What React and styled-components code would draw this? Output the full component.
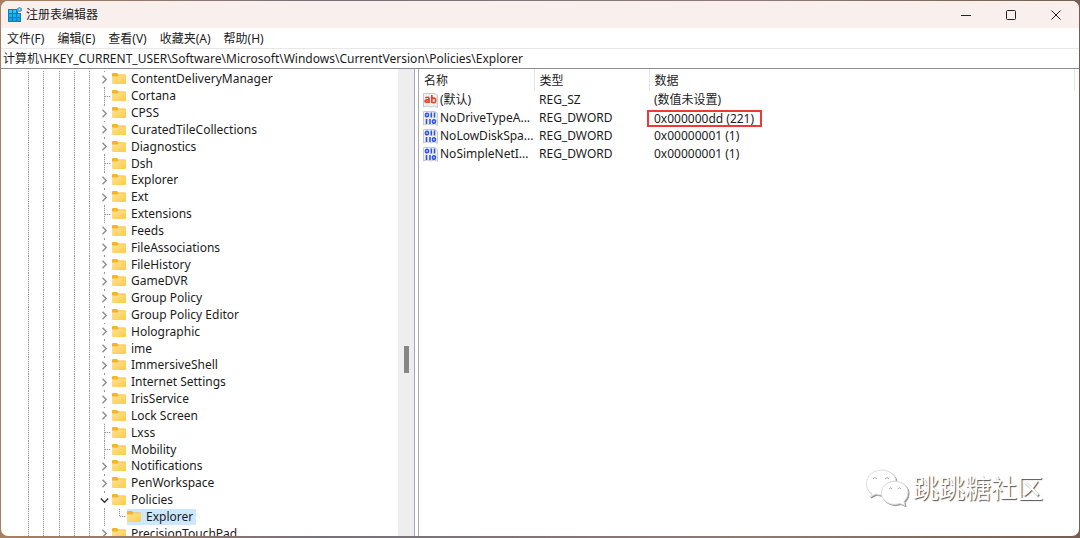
import React, {useState} from "react";
import styled, {createGlobalStyle} from "styled-components";

const keys = [
    {name: "ContentDeliveryManager", kids: true},
    {name: "Cortana"},
    {name: "CPSS", kids: true},
    {name: "CuratedTileCollections", kids: true},
    {name: "Diagnostics", kids: true},
    {name: "Dsh"},
    {name: "Explorer", kids: true},
    {name: "Ext", kids: true},
    {name: "Extensions"},
    {name: "Feeds", kids: true},
    {name: "FileAssociations", kids: true},
    {name: "FileHistory", kids: true},
    {name: "GameDVR", kids: true},
    {name: "Group Policy", kids: true},
    {name: "Group Policy Editor", kids: true},
    {name: "Holographic", kids: true},
    {name: "ime", kids: true},
    {name: "ImmersiveShell", kids: true},
    {name: "Internet Settings", kids: true},
    {name: "IrisService", kids: true},
    {name: "Lock Screen", kids: true},
    {name: "Lxss"},
    {name: "Mobility"},
    {name: "Notifications", kids: true},
    {name: "PenWorkspace", kids: true},
    {name: "Policies", kids: true, open: true},
    {name: "Explorer", child: true},
    {name: "PrecisionTouchPad", kids: true},
];

const values = [
    {name: "(默认)", type: "REG_SZ", data: "(数值未设置)"},
    {name: "NoDriveTypeA...", type: "REG_DWORD", data: "0x000000dd (221)", marked: true},
    {name: "NoLowDiskSpa...", type: "REG_DWORD", data: "0x00000001 (1)"},
    {name: "NoSimpleNetI...", type: "REG_DWORD", data: "0x00000001 (1)"},
];

const menus = ["文件(F)", "编辑(E)", "查看(V)", "收藏夹(A)", "帮助(H)"];

function AppIcon() {
    return (
        <svg width="16" height="16" viewBox="0 0 16 16">
            <path d="M1 2h10v4h3v9H1z" fill="#0c7fb8"/>
            <path d="M2 3h3v3H2zM6 3h3v3H6z" fill="#36c0f0"/>
            <path d="M2 7h3v3H2zM6 7h3v3H6zM10 7h3v3h-3z" fill="#22aee8"/>
            <path d="M2 11h3v3H2zM6 11h3v3H6zM10 11h3v3h-3z" fill="#1b9fdc"/>
            <path d="M12.500 0L15 1.300v2.700l-2.500 1.300L10 4V1.300z" fill="#4aa6d0"/>
            <circle cx="12.500" cy="2.600" r="1" fill="#a8e2f7"/>
        </svg>
    );
}

function FolderIcon() {
    return (
        <svg width="14" height="12" viewBox="0 0 14 12">
            <defs>
                <linearGradient id="folder" x1="0" y1="0" x2="1" y2="1">
                    <stop offset="0" stopColor="#ffe39a"/>
                    <stop offset="1" stopColor="#fccb45"/>
                </linearGradient>
            </defs>
            <path d="M0 1q0-1 1-1h4l1.300 1.500H13q1 0 1 1V6H0z" fill="#f5b424"/>
            <path d="M0 3.500h5.500l1.200-1.200H14V10q0 1-1 1H1q-1 0-1-1z" fill="url(#folder)"/>
        </svg>
    );
}

function ValueIcon({text}) {
    return (
        <svg width="15" height="15" viewBox="0 0 15 15">
            <path d="M.5.5h11.500l2.500 2v12l-3-1.500-3.500 1-3.500-1-4 1z" fill="#eef0f3" stroke="#c6cad0"/>
            {text ? (
                <g fill="none" stroke="#e0472a" strokeWidth="1.700">
                    <path d="M2.300 4.800q3.700-1.500 3.700.9V10M6 7q-3.900-.3-3.900 1.300T6 8.800M8.800 2v8M8.800 5.800q3.900-1.800 3.900 1.500t-3.900 1.900"/>
                </g>
            ) : (
                <g fill="none" stroke="#2e55e6" strokeWidth="1.600">
                    <ellipse cx="4" cy="4" rx="1.500" ry="1.800"/>
                    <path d="M8.300 1.500v5M11.500 1.500v5M3.500 8v5M7 8v5"/>
                    <ellipse cx="11" cy="10.500" rx="1.500" ry="1.800"/>
                </g>
            )}
        </svg>
    );
}

function Chevron({open}) {
    return (
        <svg width="9" height="9" viewBox="0 0 9 9" fill="none" stroke={open ? "#333" : "#8c8c8c"} strokeWidth="1.400">
            <path d={open ? "M.8 2.500l3.700 3.700 3.700-3.700" : "M2.500.8l3.700 3.700-3.700 3.700"}/>
        </svg>
    );
}

function TreeRow({item, selected, onSelect}) {
    return (
        <Row>
            <Guides><i/><i/><i/><i/><i/></Guides>
            <Joint $branch={!item.kids && !item.child}>
                {item.kids && <Toggle aria-label={item.name}><Chevron open={item.open}/></Toggle>}
            </Joint>
            {item.child && <Joint $branch $corner/>}
            <KeyButton $selected={selected} onClick={onSelect}>
                <FolderIcon/>
                <span>{item.name}</span>
            </KeyButton>
        </Row>
    );
}

function Watermark() {
    return (
        <Mark>
            <svg width="44" height="38" viewBox="0 0 44 38" fill="#fff" stroke="#ddd" strokeWidth="1">
                <path d="M7 25C-2 19 .5 6 10 2.500c9-4 20 .5 21 9.500-8 0-15 5-14 14-2 .2-4-.2-6-1l-6 3z"/>
                <path d="M30 12.500c8 0 13 5 13 11 0 4-2 7-4 9l1 4-5-2c-9 3-18-2-18.500-10C16 18 22 12.500 30 12.500z"/>
                <path d="M8 10q2-3 4 0M20 10q2-3 4 0M24 20q1.500-2.500 3 0M33 20q1.500-2.500 3 0" fill="none" stroke="#aaa"/>
            </svg>
            <span>跳跳糖社区</span>
        </Mark>
    );
}

export default function App() {
    const [selected, setSelected] = useState(26);

    return (
        <Desktop>
            <GlobalStyle/>
            <Window>
                <TitleBar>
                    <AppIcon/>
                    <h1>注册表编辑器</h1>
                    <WindowButton aria-label="最小化">
                        <svg width="10" height="10" viewBox="0 0 10 10"><path d="M0 5.500h10"/></svg>
                    </WindowButton>
                    <WindowButton aria-label="最大化">
                        <svg width="10" height="10" viewBox="0 0 10 10"><rect x=".5" y=".5" width="9" height="9" rx="1"/></svg>
                    </WindowButton>
                    <WindowButton aria-label="关闭">
                        <svg width="10" height="10" viewBox="0 0 10 10"><path d="M.5.5l9 9M9.500.5l-9 9"/></svg>
                    </WindowButton>
                </TitleBar>
                <MenuBar>
                    {menus.map((menu) => <button key={menu}>{menu}</button>)}
                </MenuBar>
                <Address
                    aria-label="地址"
                    defaultValue="计算机\HKEY_CURRENT_USER\Software\Microsoft\Windows\CurrentVersion\Policies\Explorer"
                />
                <Panes>
                    <TreePane>
                        <Tree>
                            {keys.map((item, index) => (
                                <TreeRow
                                    key={index}
                                    item={item}
                                    selected={index === selected}
                                    onSelect={() => setSelected(index)}
                                />
                            ))}
                        </Tree>
                        <ScrollTrack><ScrollThumb/></ScrollTrack>
                    </TreePane>
                    <ValuePane>
                        <ValueTable>
                            <colgroup>
                                <col width="115"/>
                                <col width="115"/>
                                <col/>
                            </colgroup>
                            <thead>
                                <tr><th>名称</th><th>类型</th><th>数据</th></tr>
                            </thead>
                            <tbody>
                                {values.map((value) => (
                                    <tr key={value.name}>
                                        <td>
                                            <ValueName>
                                                <ValueIcon text={value.type === "REG_SZ"}/>
                                                <span>{value.name}</span>
                                            </ValueName>
                                        </td>
                                        <td>{value.type}</td>
                                        <td>{value.marked ? <Marked>{value.data}</Marked> : value.data}</td>
                                    </tr>
                                ))}
                            </tbody>
                        </ValueTable>
                    </ValuePane>
                </Panes>
                <Watermark/>
            </Window>
        </Desktop>
    );
}

const GlobalStyle = createGlobalStyle`
    * {
        box-sizing: border-box;
    }

    body {
        margin: 0;
    }

    body, button, input {
        font-family: "Noto Sans", "Noto Sans CJK SC", sans-serif;
        font-size: 12px;
        line-height: 16px;
        color: #1c1c1c;
    }

    button {
        padding: 0;
        border: none;
        background: none;
    }

    svg {
        display: block;
        flex-shrink: 0;
    }
`;

const Desktop = styled.div`
    height: 100vh;
    padding: 1px 1px 2px;
    background: linear-gradient(90deg, #a9805f, #77707c 30%, #8d7a74 70%, #765f52);
`;

const Window = styled.div`
    position: relative;
    display: flex;
    flex-direction: column;
    height: 100%;
    overflow: hidden;
    border-radius: 7px;
    background: #fff;
`;

const TitleBar = styled.header`
    display: flex;
    align-items: center;
    height: 27px;
    padding: 0 1px 0 6px;
    background: #f9f0ee;

    h1 {
        flex: 1;
        margin: 0 0 0 3px;
        font-size: 12px;
        font-weight: 400;
    }
`;

const WindowButton = styled.button`
    display: flex;
    align-items: center;
    justify-content: center;
    width: 45px;
    height: 27px;

    svg {
        fill: none;
        stroke: #222;
    }
`;

const MenuBar = styled.nav`
    display: flex;
    gap: 13px;
    height: 20px;
    padding: 2px 6px 0;
`;

const Address = styled.input`
    height: 21px;
    padding: 0 2px 1px;
    border: none;
    border-top: 1px solid #e8e8e8;
    border-bottom: 1px solid #8a8d98;
    outline: none;
`;

const Panes = styled.main`
    display: flex;
    flex: 1;
    min-height: 0;
`;

const TreePane = styled.section`
    display: flex;
    width: 414px;
    max-width: 50%;
    overflow: hidden;
    border-right: 1px solid #a5a9b4;
`;

const Tree = styled.div`
    display: flex;
    flex: 1;
    flex-direction: column;
    margin-bottom: -6px;
    padding-top: 2px;
`;

const Row = styled.div`
    display: flex;
    flex: 1 0 0;
    align-items: center;
    padding-left: 20px;
`;

const Guides = styled.span`
    display: flex;
    align-self: stretch;
    width: 76px;

    i {
        flex: 1;
        background: repeating-linear-gradient(#999 0 1px, #e4e4e4 1px 2px) center / 1px 100% no-repeat;
    }
`;

const Joint = styled.span`
    display: flex;
    align-items: center;
    justify-content: center;
    align-self: stretch;
    width: 15px;
    background-image:
        repeating-linear-gradient(#999 0 1px, #e4e4e4 1px 2px),
        ${(p) => (p.$branch ? "repeating-linear-gradient(90deg, #999 0 1px, #e4e4e4 1px 2px)" : "none")};
    background-position: 7px 0, 8px 50%;
    background-size: 1px ${(p) => (p.$corner ? "50%" : "100%")}, 6px 1px;
    background-repeat: no-repeat;
`;

const Toggle = styled.button`
    display: flex;
    padding: 3px 0;
    background: #fff;
`;

const KeyButton = styled.button`
    display: flex;
    align-items: center;
    align-self: stretch;
    gap: 5px;
    padding: 0 3px 0 0;
    white-space: nowrap;
    background: ${(p) => (p.$selected ? "#cce8ff" : "none")};
`;

const ScrollTrack = styled.div`
    display: flex;
    align-items: center;
    justify-content: center;
    width: 16px;
    padding-top: 114px;
    background: #eee;
`;

const ScrollThumb = styled.div`
    width: 5px;
    height: 27px;
    background: #868686;
`;

const ValuePane = styled.section`
    flex: 1;
    min-width: 0;
    margin-left: 3px;
    padding-right: 4px;
    border-left: 1px solid #a5a9b4;
`;

const ValueTable = styled.table`
    width: 100%;
    table-layout: fixed;
    border-collapse: collapse;

    th {
        height: 22px;
        padding: 1px 5px 0;
        border-right: 1px solid #e5e5e5;
        font-weight: 400;
        text-align: left;
    }

    td {
        height: 18px;
        padding: 0 0 0 5px;
        white-space: nowrap;
    }

    td:first-child {
        padding-left: 4px;
    }
`;

const ValueName = styled.span`
    display: flex;
    align-items: center;
    gap: 2px;
`;

const Marked = styled.span`
    display: block;
    width: fit-content;
    margin-left: -7px;
    padding: 0 6px 0 5px;
    border: 2px solid #ed3a38;
    line-height: 13px;
`;

const Mark = styled.div`
    position: absolute;
    right: 36px;
    bottom: 29px;
    display: flex;
    align-items: center;
    gap: 4px;
    color: #fff;
    font-size: 26px;
    line-height: 38px;
    text-shadow: 1px 1px 1px #555;

    svg {
        filter: drop-shadow(1px 1px 0 #888);
    }
`;
